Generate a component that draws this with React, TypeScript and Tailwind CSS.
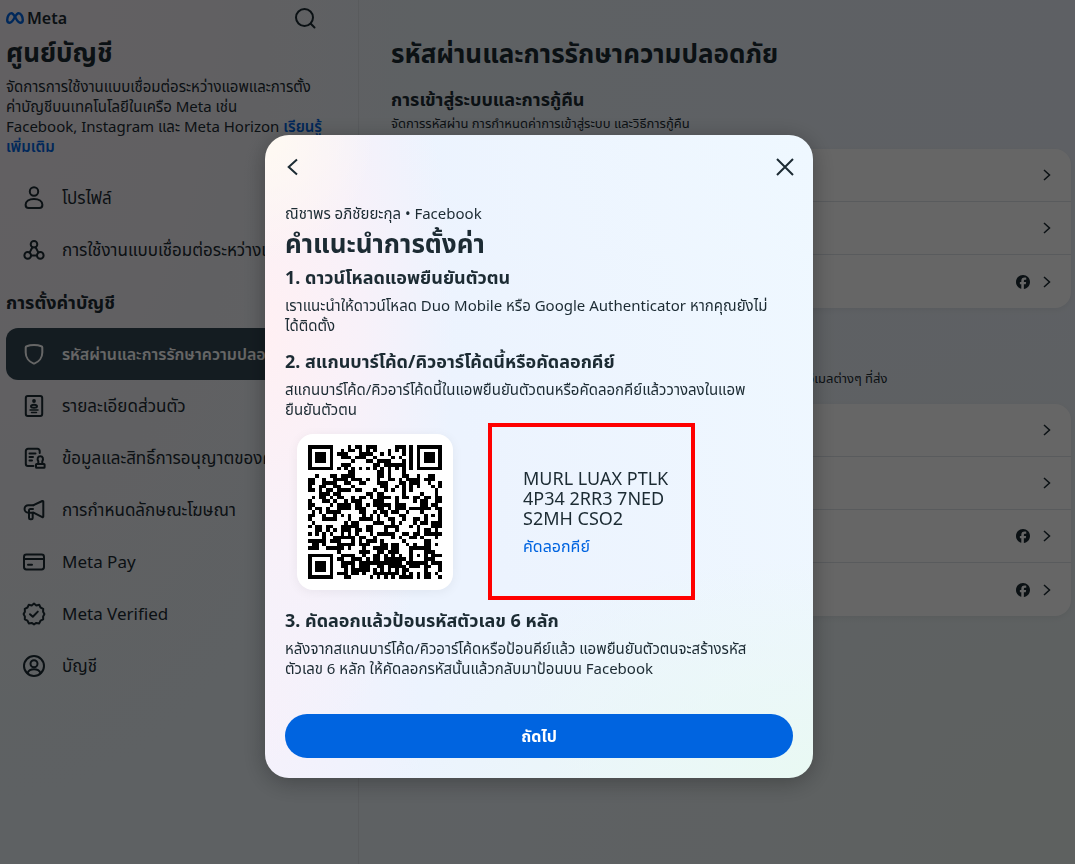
import type { ReactNode } from 'react';
import { FaFacebook } from 'react-icons/fa6';

type NavItem = { label: string; icon: ReactNode; active?: boolean };

const PROFILE_ITEMS: NavItem[] = [
  {
    label: 'โปรไฟล์',
    icon: (
      <>
        <circle cx="12" cy="5.5" r="4.2" />
        <path d="M3.600 18.800c0-3.700 3.400-5.900 8.400-5.900s8.400 2.200 8.400 5.900c0 2.400-1.200 3.300-3 3.300H6.600c-1.800 0-3-.9-3-3.300Z" />
      </>
    ),
  },
  {
    label: 'การใช้งานแบบเชื่อมต่อระหว่างแอพ',
    icon: (
      <>
        <circle cx="12" cy="6.200" r="3.300" />
        <circle cx="5.700" cy="17.400" r="3.300" />
        <circle cx="18.300" cy="17.400" r="3.300" />
        <path d="M10.400 9.200 7.600 14.600M13.600 9.200l2.800 5.400M9 17.400h6" />
      </>
    ),
  },
];

const SETTING_ITEMS: NavItem[] = [
  {
    label: 'รหัสผ่านและการรักษาความปลอดภัย',
    active: true,
    icon: <path d="M12 3c2.800 0 5.500.5 7.300 1.200.6.200 1 .8 1 1.400v4.900c0 5-3.300 9.200-7.600 10.900-.5.200-.9.200-1.400 0C7 19.700 3.700 15.500 3.700 10.500V5.600c0-.6.4-1.200 1-1.400C6.500 3.500 9.200 3 12 3Z" />,
  },
  {
    label: 'รายละเอียดส่วนตัว',
    icon: (
      <>
        <rect x="3.800" y="2" width="16.400" height="20" rx="2" />
        <circle cx="12" cy="7" r="1.900" fill="currentColor" stroke="none" />
        <ellipse cx="12" cy="12.300" rx="3" ry="1.500" />
        <path d="M8 16h8M9.500 18.600h5" strokeWidth="1.500" />
      </>
    ),
  },
  {
    label: 'ข้อมูลและสิทธิ์การอนุญาตของคุณ',
    icon: (
      <>
        <path d="M11.500 20H6a2.200 2.200 0 0 1-2.200-2.200V5A2.200 2.200 0 0 1 6 2.800h9.500A2.200 2.200 0 0 1 17.700 5v2" />
        <path d="M7.500 7.500h6M7.500 11h3.500M7.500 14.500h2.500" />
        <path d="M16.300 18v-2.800c-1.300-2.300-.7-5 2-5s3.300 2.700 2 5V18" />
        <rect x="14" y="18" width="8.600" height="3.800" rx=".6" />
      </>
    ),
  },
  {
    label: 'การกำหนดลักษณะโฆษณา',
    icon: (
      <>
        <path d="M11.500 7.200 20.300 3c.5-.2 1 .1 1 .6v15c0 .5-.5.800-1 .5l-8.800-4.400" />
        <path d="M11.500 7.200H6.300a3.700 3.700 0 0 0 0 7.500h5.200" />
        <path d="M11 11H8.400c-.8 0-1.400.6-1.400 1.400v7.500c0 .8.600 1.400 1.400 1.400h.9c.8 0 1.400-.6 1.400-1.400v-5.200" />
      </>
    ),
  },
  {
    label: 'Meta Pay',
    icon: (
      <>
        <rect x="2" y="4.500" width="20" height="15" rx="2.400" />
        <path d="M2 9h20M6 14.700h4" />
      </>
    ),
  },
  {
    label: 'Meta Verified',
    icon: (
      <>
        <path d="m12 1.600 2.300 1.900 2.900-.7 1.300 2.700 2.700 1.300-.1 2.900 1.300 2.300-1.300 2.600.1 2.800-2.700 1.300-1.300 2.700-2.900-.5L12 22.400l-2.300-1.500-2.900.5-1.300-2.700-2.700-1.300.1-2.800L1.600 12l1.300-2.300-.1-2.900 2.700-1.300 1.300-2.700 2.900.7Z" />
        <path d="m8 12.200 2.800 2.600 5-5.200" />
      </>
    ),
  },
  {
    label: 'บัญชี',
    icon: (
      <>
        <circle cx="12" cy="12" r="10" />
        <circle cx="12" cy="9.700" r="3.500" />
        <path d="M5.500 19c1-2.400 3.400-3.700 6.500-3.700s5.500 1.300 6.500 3.700" />
      </>
    ),
  },
];

const LOGIN_ROWS = [
  { label: 'เปลี่ยนรหัสผ่าน', facebook: false },
  { label: 'การยืนยันตัวตนสองชั้น', facebook: false },
  { label: 'การเข้าสู่ระบบที่บันทึกไว้', facebook: true },
];

const SECURITY_ROWS = [
  { label: 'ตำแหน่งที่คุณเข้าสู่ระบบ', facebook: false },
  { label: 'การแจ้งเตือนการเข้าสู่ระบบ', facebook: false },
  { label: 'อีเมลล่าสุด', facebook: true },
  { label: 'การตรวจสอบความปลอดภัย', facebook: true },
];

const QR_SIZE = 37;

// square ring with a solid centre, as in the corners of a code
function ringCell(x: number, y: number, cx: number, cy: number, radius: number) {
  const d = Math.max(Math.abs(x - cx), Math.abs(y - cy));
  if (radius === 3) return d > 4 ? null : d === 3 || d <= 1;
  return d > radius ? null : d !== 1;
}

function buildQrPath() {
  const last = QR_SIZE - 4;
  let seed = 20231;
  let path = '';
  for (let y = 0; y < QR_SIZE; y++) {
    for (let x = 0; x < QR_SIZE; x++) {
      seed = (seed * 1103515245 + 12345) % 2147483648;
      let dark = seed / 2147483648 > 0.49;
      if (x === 6 || y === 6) dark = (x + y) % 2 === 0;
      const fixed =
        ringCell(x, y, 3, 3, 3) ??
        ringCell(x, y, last, 3, 3) ??
        ringCell(x, y, 3, last, 3) ??
        ringCell(x, y, 30, 30, 2);
      if (fixed ?? dark) path += `M${x} ${y}h1v1h-1z`;
    }
  }
  return path;
}

const QR_PATH = buildQrPath();

function NavIcon({ children }: { children: ReactNode }) {
  return (
    <svg
      viewBox="0 0 24 24"
      className="size-6 shrink-0"
      fill="none"
      stroke="currentColor"
      strokeWidth="2"
      strokeLinecap="round"
      strokeLinejoin="round"
      aria-hidden="true"
    >
      {children}
    </svg>
  );
}

function NavList({ items }: { items: NavItem[] }) {
  return (
    <ul>
      {items.map((item) => (
        <li key={item.label}>
          <a
            href="#"
            className={
              item.active
                ? 'flex h-13 items-center gap-4 rounded-xl bg-[#344854] px-4 text-base font-semibold whitespace-nowrap text-white'
                : 'flex h-13 items-center gap-4 rounded-xl px-4 text-[17px] whitespace-nowrap'
            }
          >
            <NavIcon>{item.icon}</NavIcon>
            <span className="overflow-hidden text-ellipsis">{item.label}</span>
          </a>
        </li>
      ))}
    </ul>
  );
}

function SettingsCard({ rows }: { rows: { label: string; facebook: boolean }[] }) {
  return (
    <div className="divide-y divide-[#dee3e9] rounded-2xl bg-white shadow-[0_2px_6px_rgba(0,0,0,0.06)]">
      {rows.map((row) => (
        <button key={row.label} type="button" aria-label={row.label} className="flex h-[53px] w-full items-center justify-end gap-[9px] px-4">
          {row.facebook && <FaFacebook className="size-[14px]" />}
          <svg viewBox="0 0 16 16" className="size-4" fill="none" stroke="currentColor" strokeWidth="1.500" aria-hidden="true">
            <path d="m5 3 5.500 5L5 13" />
          </svg>
        </button>
      ))}
    </div>
  );
}

function Sidebar() {
  return (
    <aside className="w-[359px] shrink-0 border-r border-[#dee3e9] pr-3 pl-[6px]">
      <div className="flex h-9 items-center justify-between pr-[29px]">
        <div className="flex items-center gap-[3px]">
          <svg viewBox="0 0 24 16" className="h-3 w-[18px] text-[#0064e0]" fill="none" stroke="currentColor" strokeWidth="3.200" aria-hidden="true">
            <path d="M5 14.400C2.800 14.400 1.600 13 1.600 10.600 1.600 6 4 1.600 7.200 1.600c4.600 0 6.600 12.800 11.800 12.800 2.200 0 3.400-1.400 3.400-3.800 0-4.600-2.400-9-5.600-9C12.200 1.600 10.200 14.400 5 14.400Z" />
          </svg>
          <span className="text-base font-semibold">Meta</span>
        </div>
        <button type="button" aria-label="ค้นหา">
          <svg viewBox="0 0 24 24" className="size-6" fill="none" stroke="currentColor" strokeWidth="2" strokeLinecap="round">
            <circle cx="11.500" cy="11.500" r="8.500" />
            <path d="m17.800 17.800 3.700 3.700" />
          </svg>
        </button>
      </div>
      <h1 className="text-[26px] leading-8 font-bold">ศูนย์บัญชี</h1>
      <p className="mt-2 text-[15px] leading-5">
        จัดการการใช้งานแบบเชื่อมต่อระหว่างแอพและการตั้ง
        <br />
        ค่าบัญชีบนเทคโนโลยีในเครือ Meta เช่น
        <br />
        Facebook, Instagram และ Meta Horizon{' '}
        <a href="#" className="font-semibold text-[#0064e0]">
          เรียนรู้
          <br />
          เพิ่มเติม
        </a>
      </p>
      <nav className="mt-4">
        <NavList items={PROFILE_ITEMS} />
        <h2 className="flex h-[52px] items-center text-lg font-bold">การตั้งค่าบัญชี</h2>
        <NavList items={SETTING_ITEMS} />
      </nav>
    </aside>
  );
}

function SetupDialog() {
  return (
    <div
      role="dialog"
      aria-modal="true"
      aria-labelledby="setup-title"
      className="w-[548px] rounded-3xl bg-[radial-gradient(110px_130px_at_0%_0%,#fffaf2_0%,#fffaf200_100%),radial-gradient(190px_440px_at_0%_30%,#fff0f3_0%,#f8f1f9_50%,#f8f1f900_100%),radial-gradient(160px_300px_at_0%_90%,#f6f1fb_0%,#f6f1fb00_100%),radial-gradient(420px_220px_at_100%_100%,#e9f9f3_0%,#e9f9f300_100%),linear-gradient(75deg,#ecf3fe_40%,#eff8ff)] p-5 shadow-[0_4px_24px_rgba(0,0,0,0.3)]"
    >
      <div className="flex h-6 items-center justify-between">
        <button type="button" aria-label="ย้อนกลับ" className="-ml-1">
          <svg viewBox="0 0 24 24" className="size-6" fill="none" stroke="currentColor" strokeWidth="2">
            <path d="m16 4.500-8.300 7.500 8.300 7.500" />
          </svg>
        </button>
        <button type="button" aria-label="ปิด">
          <svg viewBox="0 0 24 24" className="-mr-1 size-6" fill="none" stroke="currentColor" strokeWidth="2">
            <path d="m4 4 16 16M20 4 4 20" />
          </svg>
        </button>
      </div>

      <p className="mt-6 text-[15px] leading-5">ณิชาพร อภิชัยยะกุล • Facebook</p>
      <h2 id="setup-title" className="mt-1 text-[26px] leading-8 font-bold">คำแนะนำการตั้งค่า</h2>

      <h3 className="mt-2 text-lg leading-5 font-bold">1. ดาวน์โหลดแอพยืนยันตัวตน</h3>
      <p className="mt-2 text-[15px] leading-5">
        เราแนะนำให้ดาวน์โหลด Duo Mobile หรือ Google Authenticator หากคุณยังไม่
        <br />
        ได้ติดตั้ง
      </p>

      <h3 className="mt-4 text-lg leading-5 font-bold">2. สแกนบาร์โค้ด/คิวอาร์โค้ดนี้หรือคัดลอกคีย์</h3>
      <p className="mt-2 text-[15px] leading-5">
        สแกนบาร์โค้ด/คิวอาร์โค้ดนี้ในแอพยืนยันตัวตนหรือคัดลอกคีย์แล้ววางลงในแอพ
        <br />
        ยืนยันตัวตน
      </p>

      <div className="mt-1 flex items-center gap-[35px] pl-3">
        <div className="rounded-2xl bg-white p-[11px] shadow-[0_2px_12px_rgba(0,0,0,0.06)]">
          <svg viewBox="0 0 37 37" className="size-[134px]" shapeRendering="crispEdges" role="img" aria-label="คิวอาร์โค้ด">
            <path d={QR_PATH} fill="#000" />
          </svg>
        </div>
        <div className="flex h-[177px] w-[207px] flex-col items-start justify-center border-4 border-[#ff0000] pl-[31px]">
          <p className="w-[152px] text-lg leading-5">MURL LUAX PTLK 4P34 2RR3 7NED S2MH CSO2</p>
          <button type="button" className="mt-2 text-base leading-5 text-[#0064e0]">คัดลอกคีย์</button>
        </div>
      </div>

      <h3 className="mt-[10px] text-lg leading-5 font-bold">3. คัดลอกแล้วป้อนรหัสตัวเลข 6 หลัก</h3>
      <p className="mt-2 text-[15px] leading-5">
        หลังจากสแกนบาร์โค้ด/คิวอาร์โค้ดหรือป้อนคีย์แล้ว แอพยืนยันตัวตนจะสร้างรหัส
        <br />
        ตัวเลข 6 หลัก ให้คัดลอกรหัสนั้นแล้วกลับมาป้อนบน Facebook
      </p>

      <button type="button" className="mt-9 h-11 w-full rounded-full bg-[#0064e0] text-base font-bold text-white">
        ถัดไป
      </button>
    </div>
  );
}

export default function App() {
  return (
    <div className="min-h-screen bg-[radial-gradient(420px_800px_at_0%_0%,#f5f0f6_0%,#f3f0f5_45%,#f3f0f500_100%),radial-gradient(circle_at_100%_100%,#eaf3ef_0%,#eaf3ef00_45%),linear-gradient(90deg,#eaf3f7,#ecf1fa)] font-['Noto_Sans','Noto_Sans_Thai',sans-serif] text-[#1c2b33]">
      <div className="flex min-h-screen">
        <Sidebar />
        <main className="min-w-0 flex-1 pt-[35px] pr-1 pl-8">
          <h1 className="text-[26px] leading-9 font-bold">รหัสผ่านและการรักษาความปลอดภัย</h1>
          <section className="mt-4">
            <h2 className="text-lg leading-6 font-bold">การเข้าสู่ระบบและการกู้คืน</h2>
            <p className="mt-[2px] mb-4 text-[13px] leading-5">จัดการรหัสผ่าน การกำหนดค่าการเข้าสู่ระบบ และวิธีการกู้คืน</p>
            <SettingsCard rows={LOGIN_ROWS} />
          </section>
          <section className="mt-15" aria-label="การตรวจสอบความปลอดภัย">
            <p className="mb-4 text-[13px] leading-5">
              ตรวจสอบปัญหาด้านความปลอดภัยได้ด้วยการดูการตรวจสอบทั้งแอพ อุปกรณ์ และอีเมลต่างๆ ที่ส่ง
            </p>
            <SettingsCard rows={SECURITY_ROWS} />
          </section>
        </main>
      </div>

      <div className="fixed inset-0 flex items-start justify-center overflow-y-auto bg-black/60 pt-[135px] pl-[3px]">
        <SetupDialog />
      </div>
    </div>
  );
}
